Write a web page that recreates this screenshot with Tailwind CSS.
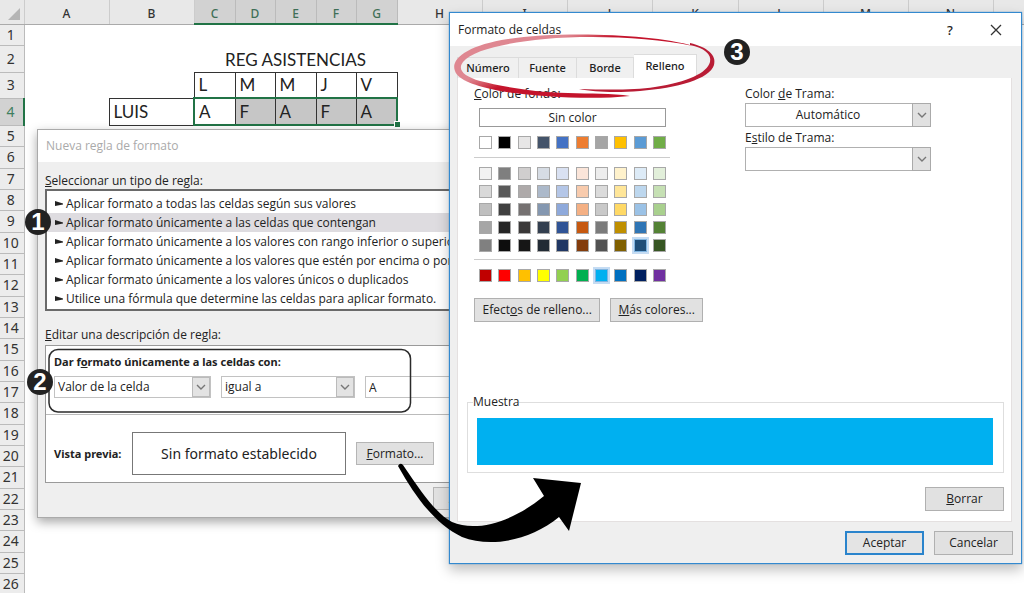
<!DOCTYPE html>
<html lang="es">
<head>
<meta charset="utf-8">
<meta name="viewport" content="width=device-width, initial-scale=1">
<title>Formato condicional</title>
<script src="https://cdn.jsdelivr.net/npm/@tailwindcss/browser@4"></script>
</head>
<body class="relative min-h-screen overflow-hidden bg-white font-['Noto_Sans',sans-serif] text-[11px] leading-4 text-[#222]">

<!-- Spreadsheet -->
<main class="h-screen overflow-hidden">
  <table class="w-[1078px] table-fixed border-collapse font-[Lato,sans-serif] text-[17px] leading-5">
    <colgroup>
      <col class="w-[24px]"><col class="w-[85px]"><col class="w-[85px]"><col class="w-[41px]"><col class="w-[40px]"><col class="w-[41px]"><col class="w-[40px]"><col class="w-[41px]"><col class="w-[85px]"><col class="w-[85px]"><col class="w-[85px]"><col class="w-[86px]"><col class="w-[85px]"><col class="w-[85px]"><col class="w-[85px]"><col class="w-[85px]">
    </colgroup>
    <thead>
      <tr id="cols" class="h-6 bg-[#e8e8e8] font-['Noto_Sans',sans-serif] text-xs text-[#333]">
        <th class="border-b border-[#aaa] p-0"><svg class="mt-1 ml-2 size-3" viewBox="0 0 12 12" aria-hidden="true"><path d="M12 0V12H0Z" fill="#b5b5b5"/></svg></th>
      </tr>
    </thead>
    <tbody id="rows"></tbody>
  </table>
</main>

<!-- New rule dialog -->
<section aria-labelledby="t1" class="absolute top-[129px] left-[37px] w-[560px] border border-[#aaa] bg-[#efefef] pb-[7px] shadow-[0_4px_10px_rgba(0,0,0,0.35)]">
  <h2 id="t1" class="h-8 bg-white px-2 pt-2 font-['Open_Sans',sans-serif] text-xs text-[#aaa]">Nueva regla de formato</h2>
  <div class="px-[7px] pt-[11px]">
    <h3 id="lt" class="font-['Open_Sans',sans-serif] text-xs"><u>S</u>eleccionar un tipo de regla:</h3>
    <ul id="types" aria-labelledby="lt" class="border-2 border-[#6a6a6a] bg-white pt-[3px] pb-px font-['Open_Sans',sans-serif] text-xs"></ul>
    <h3 class="mt-4 font-['Open_Sans',sans-serif] text-xs"><u>E</u>ditar una descripción de regla:</h3>
    <div class="mt-[2px] border border-[#9a9a9a] bg-white">
      <div class="border-b border-[#bbb] px-2 pt-2 pb-4">
        <h4 class="font-bold">Dar f<u>o</u>rmato únicamente a las celdas con:</h4>
        <div class="mt-[6px] flex gap-[10px]">
          <div class="relative">
            <select aria-label="Tipo de valor" class="h-[22px] w-[157px] appearance-none border border-[#c2c2c2] bg-white pl-[3px] font-['Open_Sans',sans-serif] text-xs"><option>Valor de la celda</option></select>
            <span class="pointer-events-none absolute inset-y-px right-px flex w-[18px] items-center justify-center border border-[#bbb] bg-[#e3e3e3]"><svg class="h-[6px] w-[10px]" viewBox="0 0 10 6"><path d="M1 1L5 5L9 1" fill="none" stroke="#777" stroke-width="1.4"/></svg></span>
          </div>
          <div class="relative">
            <select aria-label="Operador" class="h-[22px] w-[134px] appearance-none border border-[#c2c2c2] bg-white pl-[3px] font-['Open_Sans',sans-serif] text-xs"><option>igual a</option></select>
            <span class="pointer-events-none absolute inset-y-px right-px flex w-[18px] items-center justify-center border border-[#bbb] bg-[#e3e3e3]"><svg class="h-[6px] w-[10px]" viewBox="0 0 10 6"><path d="M1 1L5 5L9 1" fill="none" stroke="#777" stroke-width="1.4"/></svg></span>
          </div>
          <input aria-label="Valor" value="A" class="h-[22px] min-w-0 grow border border-[#c2c2c2] bg-white px-[3px] font-['Open_Sans',sans-serif] text-xs">
        </div>
      </div>
      <div class="flex items-center px-2 pt-[17px] pb-[7px]">
        <b class="w-[78px]">Vista previa:</b>
        <output class="flex h-[43px] w-[214px] items-center justify-center border border-[#777] text-sm">Sin formato establecido</output>
        <button class="ml-[10px] h-[23px] w-[78px] border border-[#b5b5b5] bg-[#e1e1e1] font-['Open_Sans',sans-serif] text-xs"><u>F</u>ormato...</button>
      </div>
    </div>
    <div class="mt-1 flex justify-end gap-2 pr-1">
      <button class="h-[23px] w-[72px] border border-[#b5b5b5] bg-[#e1e1e1]">Aceptar</button>
      <button class="h-[23px] w-[72px] border border-[#b5b5b5] bg-[#e1e1e1]">Cancelar</button>
    </div>
  </div>
</section>

<!-- Format cells dialog -->
<section aria-labelledby="t2" class="absolute top-3 right-[2px] left-[449px] border border-[#3389cf] bg-[#efefef] pb-2 shadow-[0_0_1px_#3389cf,0_6px_12px_rgba(0,0,0,0.25)]">
  <header class="flex h-[33px] items-center bg-white pr-[19px] pl-2">
    <h2 id="t2" class="grow font-['Open_Sans',sans-serif] text-xs">Formato de celdas</h2>
    <button class="w-4 text-[13px] leading-4 font-medium">?</button>
    <button aria-label="Cerrar" class="ml-8"><svg class="size-3" viewBox="0 0 12 12"><path d="M1 1L11 11M11 1L1 11" stroke="#333" stroke-width="1.3"/></svg></button>
  </header>
  <div class="pt-2 pr-[9px] pl-[7px]">
    <div role="tablist" class="flex items-end">
      <button role="tab" class="h-[21px] w-[62px] border border-b-0 border-[#dcdcdc] bg-[#f0f0f0] font-medium">Número</button>
      <button role="tab" class="h-[21px] w-[58px] border border-b-0 border-l-0 border-[#dcdcdc] bg-[#f0f0f0] font-medium">Fuente</button>
      <button role="tab" class="h-[21px] w-[57px] border border-b-0 border-l-0 border-[#dcdcdc] bg-[#f0f0f0] font-medium">Borde</button>
      <button role="tab" aria-selected="true" class="h-6 w-[63px] border border-b-0 border-l-0 border-[#dcdcdc] bg-white pb-[2px] font-medium">Relleno</button>
    </div>
    <div role="tabpanel" class="border border-t-0 border-[#e4e0e0] bg-white pr-[7px] pb-[10px] pl-[9px]">
      <div class="flex gap-[42px] pt-2 pl-[7px]">
        <div class="w-[229px]">
          <h3 class="font-['Open_Sans',sans-serif] text-xs"><u>C</u>olor de fondo:</h3>
          <button class="mt-[6px] ml-[5px] block h-[19px] w-[187px] border border-[#999] bg-white font-['Open_Sans',sans-serif] text-xs">Sin color</button>
          <div class="w-[196px]">
            <div id="base" class="flex justify-between pt-[9px] pb-[8px] pr-1 pl-[5px]"></div>
            <div id="tints" class="grid gap-y-[3px] border-y border-[#ccc] pt-[8px] pb-[6px] pr-1 pl-[5px]"></div>
            <div id="std" class="flex justify-between pt-[9px] pb-[8px] pr-1 pl-[5px]"></div>
          </div>
          <div class="mt-2 flex gap-[10px]">
            <button class="h-6 w-[127px] border border-[#b0b0b0] bg-[#e1e1e1] font-['Open_Sans',sans-serif] text-xs">Efect<u>o</u>s de relleno...</button>
            <button class="h-6 w-[93px] border border-[#b0b0b0] bg-[#e1e1e1] font-['Open_Sans',sans-serif] text-xs"><u>M</u>ás colores...</button>
          </div>
        </div>
        <div class="w-[186px]">
          <label for="tc" class="block font-['Open_Sans',sans-serif] text-xs">Color <u>d</u>e Trama:</label>
          <div class="relative mt-px">
            <select id="tc" class="h-6 w-full appearance-none border border-[#b0b0b0] bg-white pr-5 text-center font-['Open_Sans',sans-serif] text-xs"><option>Automático</option></select>
            <span class="pointer-events-none absolute inset-y-0 right-0 flex w-[19px] items-center justify-center border border-[#aaa] bg-[#e1e1e1]"><svg class="h-[6px] w-[10px]" viewBox="0 0 10 6"><path d="M1 1L5 5L9 1" fill="none" stroke="#777" stroke-width="1.4"/></svg></span>
          </div>
          <label for="te" class="mt-[3px] block font-['Open_Sans',sans-serif] text-xs">E<u>s</u>tilo de Trama:</label>
          <div class="relative mt-px">
            <select id="te" class="h-6 w-full appearance-none border border-[#b0b0b0] bg-white"><option></option></select>
            <span class="pointer-events-none absolute inset-y-0 right-0 flex w-[19px] items-center justify-center border border-[#aaa] bg-[#e1e1e1]"><svg class="h-[6px] w-[10px]" viewBox="0 0 10 6"><path d="M1 1L5 5L9 1" fill="none" stroke="#777" stroke-width="1.4"/></svg></span>
          </div>
        </div>
      </div>
      <fieldset class="mt-[72px] border border-[#dedede] px-[10px] pb-[7px] pl-[9px]">
        <legend class="-ml-1 px-0 font-['Open_Sans',sans-serif] text-xs">Muestra</legend>
        <div class="mt-2 h-[47px] bg-[#00b0f0]"></div>
      </fieldset>
      <div class="mt-[14px] flex justify-end"><button class="h-6 w-[79px] border border-[#b0b0b0] bg-[#e1e1e1] font-['Open_Sans',sans-serif] text-xs"><u>B</u>orrar</button></div>
    </div>
  </div>
  <div class="mt-[9px] flex justify-end gap-[10px] pr-2">
    <button class="h-6 w-[79px] border-2 border-[#2a84cc] bg-[#e4e4e4] font-['Open_Sans',sans-serif] text-xs">Aceptar</button>
    <button class="h-6 w-[79px] border border-[#b0b0b0] bg-[#e1e1e1] font-['Open_Sans',sans-serif] text-xs">Cancelar</button>
  </div>
</section>

<!-- Hand-drawn marks over both windows -->
<svg class="pointer-events-none absolute top-0 left-0 h-[593px] w-[1024px]" viewBox="0 0 1024 593" aria-hidden="true">
  <defs>
    <linearGradient id="pen" gradientUnits="userSpaceOnUse" x1="480" y1="74" x2="488" y2="92">
      <stop offset="0" stop-color="#df8791"/><stop offset="0.5" stop-color="#d45663"/><stop offset="1" stop-color="#c4142c"/>
    </linearGradient>
  </defs>
  <path d="M693 46C655 34 560 31 508 39C468 45 450 59 455 71C458 80 475 86 500 91C538 97 592 100 630 96C612 93 590 94 568 93C530 92 500 86 480 81C464 76 457 70 463 62C473 50 505 43 545 39C590 35 650 37 693 46Z" fill="url(#pen)"/>
  <path d="M690 43C707 47 717 55 714 65C710 79 677 88 640 91C615 93 594 92 579 89C610 90 635 90 655 87C688 82 707 73 710 62C712 54 704 48 690 45Z" fill="#b91c35"/>
  <rect x="49" y="349.500" width="361.500" height="62.500" rx="9" fill="none" stroke="#2b2b2b" stroke-width="1.500"/>
  <path d="M398 466Q400 462 403 465C423 495 438 515 452 522C477 533 514 521 544 496L533 478L581 483L569 531L559 517C530 541 490 548 462 537C436 524 417 500 398 466Z" fill="#000"/>
</svg>
<b class="absolute top-[209px] left-[25px] flex size-[26px] items-center justify-center rounded-full bg-[#222] font-['Liberation_Sans_Narrow','Liberation_Sans',sans-serif] text-2xl text-white">1</b>
<b class="absolute top-[369px] left-[27px] flex size-[26px] items-center justify-center rounded-full bg-[#222] font-['Liberation_Sans_Narrow','Liberation_Sans',sans-serif] text-2xl text-white">2</b>
<b class="absolute top-[39px] left-[724px] flex size-[26px] items-center justify-center rounded-full bg-[#222] font-['Liberation_Sans_Narrow','Liberation_Sans',sans-serif] text-2xl text-white">3</b>

<script>
const cols = document.getElementById('cols');
for (const c of [...'ABCDEFGHIJKLMN', '']) {
  const sel = c && 'CDEFG'.includes(c);
  cols.insertAdjacentHTML('beforeend', `<th class="${sel
    ? 'border-x border-b-2 border-x-[#bbb] border-b-[#217346] bg-[#d2d2d2] p-0 pt-1 font-medium text-[#3f6f57]'
    : 'border-x border-b border-x-[#ccc] border-b-[#aaa] p-0 pt-1 font-medium'}">${c}</th>`);
}
const head = (n, sel) => `<th class="${sel
  ? "border-y border-r-2 border-y-[#bbb] border-r-[#217346] bg-[#d2d2d2] p-0 pr-[2px] font-['Noto_Sans',sans-serif] text-sm font-normal text-[#3f7f5f]"
  : "border border-[#bbb] border-l-0 bg-[#ececec] p-0 pr-[2px] font-['Noto_Sans',sans-serif] text-sm font-normal text-[#333]"}">${n}</th>`;
let html = '';
for (let n = 1; n <= 26; n++) {
  const cls = n === 2 || n === 4 ? 'h-[27px]' : n === 3 ? 'h-[26px]' : n % 3 === 0 ? 'h-[22px]' : 'h-[21px]';
  let cells = '';
  if (n === 2) cells = '<td></td><td></td><td colspan="5" class="p-0 pt-1 text-center">REG ASISTENCIAS</td>';
  if (n === 3) cells = '<td></td><td></td>' + [...'LMMJV'].map(t => `<td class="border border-[#333] p-0 pl-1">${t}</td>`).join('');
  if (n === 4) cells = '<td></td><td class="border border-[#333] p-0 pl-1">LUIS</td>' + [...'AFAFA'].map((t, i) =>
    `<td class="${i ? 'border-x border-y-2 border-x-[#333] border-y-[#217346] bg-[#c6c6c6] p-0 pl-1 last:border-r-2 last:border-r-[#217346]'
      : 'border-y-2 border-r border-l-2 border-y-[#217346] border-r-[#333] border-l-[#217346] p-0 pl-1'}">${t}${i === 4 ? '<i class="absolute top-[121px] left-[394px] size-[6px] border-t border-l border-white bg-[#217346]"></i>' : ''}</td>`).join('');
  html += `<tr class="${cls}">${head(n, n === 4)}${cells}</tr>`;
}
document.getElementById('rows').innerHTML = html;

document.getElementById('types').innerHTML = [
  'Aplicar formato a todas las celdas según sus valores',
  'Aplicar formato únicamente a las celdas que contengan',
  'Aplicar formato únicamente a los valores con rango inferior o superior',
  'Aplicar formato únicamente a los valores que estén por encima o por debajo del promedio',
  'Aplicar formato únicamente a los valores únicos o duplicados',
  'Utilice una fórmula que determine las celdas para aplicar formato.'
].map((t, i) => `<li class="${i === 1 ? 'flex h-[19px] items-center gap-[3px] overflow-hidden bg-[#dedce0] pl-2 whitespace-nowrap' : 'flex h-[19px] items-center gap-[3px] overflow-hidden pl-2 whitespace-nowrap'}"><svg class="h-[6px] w-2 shrink-0" viewBox="0 0 8 6"><path d="M0 0L8 2.500V3.500L0 5Z" fill="#222"/></svg>${t}</li>`).join('');

const swatch = (c, on) => `<button aria-label="${c}" class="${on ? 'size-[13px] border border-[#7fb4e0] outline-2 outline-[#c5dcf3]' : 'size-[13px] border border-[#a8a8a8]'}" style="background:${c}"></button>`;
document.getElementById('base').innerHTML = ['#ffffff','#000000','#e7e6e6','#44546a','#4472c4','#ed7d31','#a5a5a5','#ffc000','#5b9bd5','#70ad47'].map(c => swatch(c)).join('');
document.getElementById('tints').innerHTML = [
  ['#f2f2f2','#7f7f7f','#d0cece','#d6dce4','#d9e1f2','#fbe5d9','#ededed','#fff2cc','#ddebf7','#e2efda'],
  ['#d9d9d9','#595959','#aeaaaa','#acb9ca','#b4c6e7','#f8cbad','#dbdbdb','#ffe699','#bdd7ee','#c6e0b4'],
  ['#bfbfbf','#404040','#757171','#8497b0','#8ea9db','#f4b084','#c9c9c9','#ffd966','#9bc2e6','#a9d08e'],
  ['#a6a6a6','#262626','#3a3838','#333f4f','#305496','#c65911','#7b7b7b','#bf8f00','#2f75b5','#548235'],
  ['#808080','#0d0d0d','#161616','#222b35','#203764','#833c0c','#525252','#806000','#1f4e78','#375623']
].map((r, y) => `<div class="flex h-[15px] items-center justify-between">${r.map((c, x) => swatch(c, y === 4 && x === 8)).join('')}</div>`).join('');
document.getElementById('std').innerHTML = ['#c00000','#ff0000','#ffc000','#ffff00','#92d050','#00b050','#00b0f0','#0070c0','#002060','#7030a0'].map((c, i) => swatch(c, i === 6)).join('');
</script>
</body>
</html>
